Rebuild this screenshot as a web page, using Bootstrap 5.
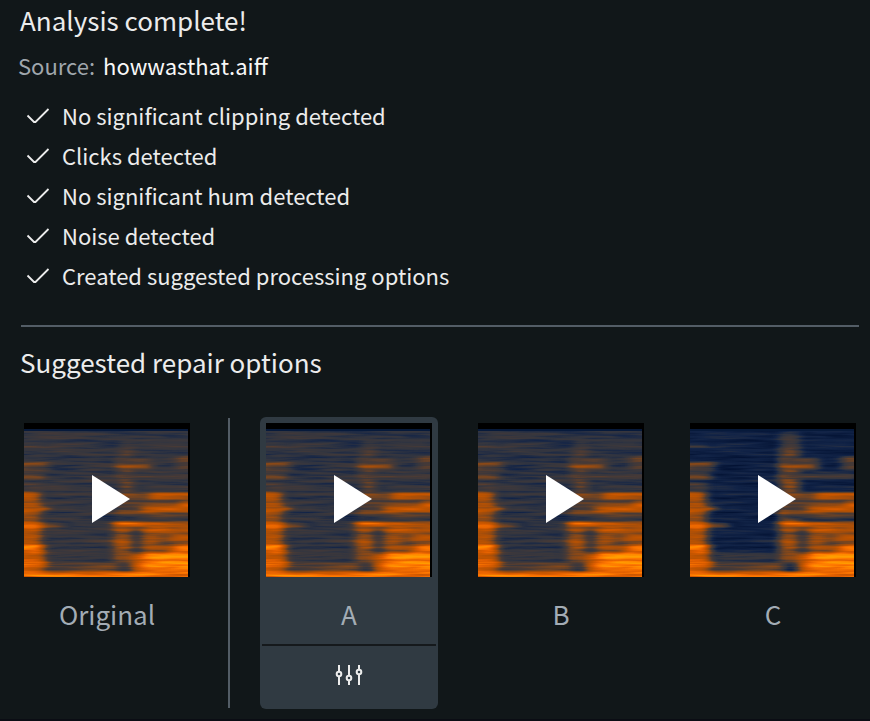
<!DOCTYPE html>
<html lang="en">
<head>
<meta charset="utf-8">
<meta name="viewport" content="width=device-width, initial-scale=1">
<title>Repair Assistant</title>
<link href="https://cdn.jsdelivr.net/npm/bootstrap@5.3.0/dist/css/bootstrap.min.css" rel="stylesheet">
<style>
  body { background: #111719; color: #ececec; font-family: "Noto Sans CJK SC", "Noto Sans", sans-serif; font-size: 22px; line-height: 40px; }
  .assistant { min-height: 100vh; border-bottom: 2px solid #0b0d14; padding: 0 8px 10px 18px; }
  .section-title { font-size: 26px; line-height: 40px; font-weight: 400; margin: 0; padding-left: 2px; }
  .source-line { margin: 5px 0 10px; column-gap: 8px; }
  .source-line dt { color: #a0a7ad; font-weight: 400; }
  .source-line dd { color: #f8f8f8; margin: 0; }
  .checks { padding-left: 8px; margin-bottom: 30px; }
  .checks li { column-gap: 12px; }
  .rule { border: 0; height: 2px; background: #535d66; opacity: 1; margin: 0 3px 15px; }
  .options { margin-top: 35px; }
  .option { flex: 1 1 0; min-width: 0; border-radius: 6px; }
  .option + .option { margin-left: 34px; }
  .option.selected { background: #303a42; }
  .divider { width: 2px; margin: 1px 30px 1px 32px; background: #535d66; }
  .play { padding: 6px 6px 0; }
  .play svg { height: 154px; background: #000; }
  .option-name { font-size: 26px; line-height: 61px; padding-top: 6px; color: #a3acb5; }
  .tune { height: 63px; color: #ececec; }
  .tune svg { margin-bottom: 6px; }
  .split { height: 2px; margin: 0 2px; background: #15191c; }
</style>
<script src="https://cdn.jsdelivr.net/npm/bootstrap@5.3.0/dist/js/bootstrap.bundle.min.js"></script>
</head>
<body>
<svg width="0" height="0" class="position-absolute" aria-hidden="true">
  <defs>
    <!-- Grey level is sound energy; the filter adds streaks and maps it to colour -->
    <filter id="heat" filterUnits="userSpaceOnUse" x="0" y="0" width="164" height="154" color-interpolation-filters="sRGB">
      <feTurbulence type="fractalNoise" baseFrequency="0.016 0.3" numOctaves="3" seed="7" result="n"/>
      <feColorMatrix in="n" type="matrix" values="1 0 0 0 0  1 0 0 0 0  1 0 0 0 0  0 0 0 0 1" result="g"/>
      <feComposite in="SourceGraphic" in2="g" operator="arithmetic" k1="0.3" k2="0.85" k3="0.22" k4="-0.11"/>
      <feColorMatrix type="matrix" values="1 0 0 0 0  0 1 0 0 0  0 0 1 0 0  0 0 0 0 1"/>
      <feComponentTransfer>
        <feFuncR type="table" tableValues="0 .01 .07 .20 .29 .46 .63 .75 .88 1 1"/>
        <feFuncG type="table" tableValues="0 .07 .14 .21 .23 .27 .30 .33 .37 .47 .62"/>
        <feFuncB type="table" tableValues="0 .20 .28 .25 .21 .13 .05 0 0 0 0"/>
      </feComponentTransfer>
    </filter>
    <filter id="soft" filterUnits="userSpaceOnUse" x="-30" y="-10" width="224" height="174" color-interpolation-filters="sRGB">
      <feGaussianBlur stdDeviation="5 1"/>
    </filter>
    <linearGradient id="rise" x1="0" y1="0" x2="0" y2="1">
      <stop offset="0" stop-color="#505050"/><stop offset=".3" stop-color="#808080"/><stop offset="1" stop-color="#a0a0a0"/>
    </linearGradient>
    <g id="voice" filter="url(#soft)">
      <rect x="-20" y="22" width="36" height="2" fill="#646464"/>
      <rect x="-20" y="39" width="45" height="8" fill="#787878"/>
      <rect x="-20" y="49" width="41" height="8" fill="#707070"/>
      <rect x="-20" y="59" width="36" height="8" fill="#585858"/>
      <rect x="-20" y="68" width="36" height="30" fill="#8c8c8c"/>
      <rect x="-20" y="70" width="36" height="7" fill="#b0b0b0"/>
      <rect x="-20" y="82" width="38" height="9" fill="#acacac"/>
      <rect x="-20" y="84" width="46" height="3" fill="#acacac"/>
      <rect x="-20" y="98" width="37" height="24" fill="#a8a8a8"/>
      <rect x="-20" y="100" width="58" height="4" fill="#888"/>
      <rect x="-20" y="100" width="38" height="4" fill="#dcdcdc"/>
      <rect x="-20" y="121" width="40" height="34" fill="#b8b8b8"/>
      <rect x="-20" y="122" width="38" height="6" fill="#e8e8e8"/>
      <rect x="-20" y="138" width="44" height="6" fill="#d6d6d6"/>
      <rect x="26" y="130" width="62" height="8" fill="#505050"/>
      <rect x="22" y="139" width="72" height="11" fill="#707070"/>
      <rect x="92" y="34" width="36" height="13" fill="#686868"/>
      <rect x="92" y="42" width="36" height="4" fill="#848484"/>
      <rect x="152" y="34" width="30" height="13" fill="#6c6c6c"/>
      <rect x="92" y="50" width="74" height="6" fill="#606060"/>
      <rect x="92" y="69" width="92" height="26" fill="#747474"/>
      <rect x="126" y="70" width="60" height="6" fill="#b4b4b4"/>
      <rect x="118" y="83" width="60" height="7" fill="#acacac"/>
      <rect x="156" y="78" width="30" height="12" fill="#acacac"/>
      <rect x="96" y="93" width="90" height="3" fill="#505050"/>
      <rect x="89" y="98" width="96" height="42" fill="#949494"/>
      <rect x="89" y="99" width="50" height="4" fill="#bcbcbc"/>
      <rect x="120" y="99" width="60" height="10" fill="#a4a4a4"/>
      <rect x="126" y="104" width="18" height="3" fill="#c4c4c4"/>
      <rect x="108" y="106" width="9" height="24" fill="#4c4c4c"/>
      <rect x="134" y="111" width="14" height="13" fill="#787878"/>
      <rect x="108" y="132" width="76" height="22" fill="#bcbcbc"/>
      <path d="M119 130h24l10-7h30v30h-66z" fill="#dadada"/>
      <rect x="122" y="131" width="60" height="4" fill="#f0f0f0"/>
      <rect x="120" y="141" width="60" height="3" fill="#fff"/>
      <rect x="-20" y="149" width="204" height="9" fill="#dadada"/>
    </g>
    <g id="cap">
      <rect width="164" height="6" fill="#000"/>
      <rect y="6" width="164" height="2" fill="#071a3b"/>
    </g>
    <path id="triangle" d="M68 52l38 24-38 24z" fill="#fff"/>
  </defs>
</svg>

<main class="assistant">
  <h1 class="section-title">Analysis complete!</h1>
  <dl class="source-line d-flex">
    <dt>Source:</dt>
    <dd>howwasthat.aiff</dd>
  </dl>
  <ul class="checks list-unstyled">
    <li class="d-flex align-items-center"><svg width="24" height="20" viewBox="0 -1 24 20" fill="none" stroke="#ececec" stroke-width="1.8" aria-hidden="true"><path d="M1.5 9.500l6.500 6.500h1.500L22.500 3"/></svg>No significant clipping detected</li>
    <li class="d-flex align-items-center"><svg width="24" height="20" viewBox="0 -1 24 20" fill="none" stroke="#ececec" stroke-width="1.8" aria-hidden="true"><path d="M1.5 9.500l6.500 6.500h1.500L22.500 3"/></svg>Clicks detected</li>
    <li class="d-flex align-items-center"><svg width="24" height="20" viewBox="0 -1 24 20" fill="none" stroke="#ececec" stroke-width="1.8" aria-hidden="true"><path d="M1.5 9.500l6.500 6.500h1.500L22.500 3"/></svg>No significant hum detected</li>
    <li class="d-flex align-items-center"><svg width="24" height="20" viewBox="0 -1 24 20" fill="none" stroke="#ececec" stroke-width="1.8" aria-hidden="true"><path d="M1.5 9.500l6.500 6.500h1.500L22.500 3"/></svg>Noise detected</li>
    <li class="d-flex align-items-center"><svg width="24" height="20" viewBox="0 -1 24 20" fill="none" stroke="#ececec" stroke-width="1.8" aria-hidden="true"><path d="M1.5 9.500l6.500 6.500h1.500L22.500 3"/></svg>Created suggested processing options</li>
  </ul>
  <hr class="rule">
  <h2 class="section-title">Suggested repair options</h2>

  <div class="options d-flex">
    <section class="option" aria-labelledby="name-original">
      <button type="button" class="play btn border-0 rounded-0 d-block w-100" aria-label="Play Original">
        <svg class="d-block w-100" viewBox="0 0 166 154" preserveAspectRatio="none" aria-hidden="true">
          <g filter="url(#heat)"><rect width="164" height="154" fill="#4e4e4e"/><rect x="96" y="14" width="13" height="56" fill="url(#rise)" opacity=".6" filter="url(#soft)"/><use href="#voice"/></g>
          <use href="#cap"/><use href="#triangle"/>
        </svg>
      </button>
      <div id="name-original" class="option-name text-center">Original</div>
    </section>
    <div class="divider"></div>
    <section class="option selected" aria-labelledby="name-a">
      <button type="button" class="play btn border-0 rounded-0 d-block w-100" aria-label="Play A">
        <svg class="d-block w-100" viewBox="0 0 166 154" preserveAspectRatio="none" aria-hidden="true">
          <g filter="url(#heat)"><rect width="164" height="154" fill="#4a4a4a"/><rect x="96" y="14" width="13" height="56" fill="url(#rise)" opacity=".6" filter="url(#soft)"/><use href="#voice"/></g>
          <use href="#cap"/><use href="#triangle"/>
        </svg>
      </button>
      <div id="name-a" class="option-name text-center">A</div>
      <div class="split"></div>
      <button type="button" class="tune btn border-0 p-0 d-flex w-100 align-items-center justify-content-center" aria-label="Adjust settings for A">
        <svg width="28" height="22" viewBox="0 0 28 22" fill="none" stroke="currentColor" stroke-width="2" aria-hidden="true"><path d="M4 1v6.500M4 12.500V21M14 1v10.500M14 16.500V21M24 1v4.500M24 10.500V21"/><circle cx="4" cy="10" r="2.300"/><circle cx="14" cy="14" r="2.300"/><circle cx="24" cy="8" r="2.300"/></svg>
      </button>
    </section>
    <section class="option" aria-labelledby="name-b">
      <button type="button" class="play btn border-0 rounded-0 d-block w-100" aria-label="Play B">
        <svg class="d-block w-100" viewBox="0 0 166 154" preserveAspectRatio="none" aria-hidden="true">
          <g filter="url(#heat)"><rect width="164" height="154" fill="#484848"/><rect x="96" y="14" width="13" height="56" fill="url(#rise)" opacity=".6" filter="url(#soft)"/><use href="#voice"/></g>
          <use href="#cap"/><use href="#triangle"/>
        </svg>
      </button>
      <div id="name-b" class="option-name text-center">B</div>
    </section>
    <section class="option" aria-labelledby="name-c">
      <button type="button" class="play btn border-0 rounded-0 d-block w-100" aria-label="Play C">
        <svg class="d-block w-100" viewBox="0 0 166 154" preserveAspectRatio="none" aria-hidden="true">
          <g filter="url(#heat)"><rect width="164" height="154" fill="#2e2e2e"/><rect x="90" y="8" width="19" height="92" fill="url(#rise)" filter="url(#soft)"/><use href="#voice"/></g>
          <use href="#cap"/><use href="#triangle"/>
        </svg>
      </button>
      <div id="name-c" class="option-name text-center">C</div>
    </section>
  </div>
</main>
</body>
</html>
